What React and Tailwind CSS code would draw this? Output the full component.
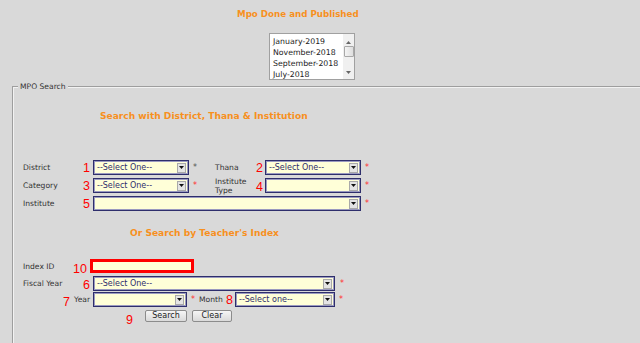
function Arrow() {
  return (
    <span className="ml-auto mr-[2px] flex h-[10px] w-[9px] shrink-0 items-center justify-center border border-[#a9a9a9] bg-[#e4e4e4]">
      <svg width="5" height="3" viewBox="0 0 5 3">
        <path d="M0 0h5L2.5 3z" fill="#111" />
      </svg>
    </span>
  )
}

function Select({ className, text }) {
  return (
    <div className={"flex h-[15px] shrink-0 items-center border border-[#2e2e6c] bg-[#ffffd8] shadow-[inset_0_0_0_1px_#9a9ac0] " + className}>
      <span className="pl-[3px] text-[8px] leading-[10px] text-[#2e2e6c]">{text}</span>
      <Arrow />
    </div>
  )
}

function Num({ className, children }) {
  return (
    <span className={"shrink-0 font-['Liberation_Sans',sans-serif] text-[12.5px] leading-[12px] text-[#ff0000] " + className}>
      {children}
    </span>
  )
}

function Star({ className, dark }) {
  return (
    <span className={"shrink-0 self-start pt-[4px] text-[8px] leading-[8px] " + (dark ? "text-[#555] " : "text-[#ff3030] ") + className}>*</span>
  )
}

function Label({ className, children }) {
  return <span className={"shrink-0 text-[7.6px] leading-[9px] text-[#333] " + className}>{children}</span>
}

function Heading({ className, children }) {
  return (
    <div className={"font-bold leading-[11px] text-[#f7901e] " + className}>{children}</div>
  )
}

export default function App() {
  return (
    <div className="h-[343px] w-[640px] overflow-hidden bg-[#d9d9d9] font-['DejaVu_Sans',sans-serif]">
      <Heading className="pl-[237px] pt-[9px] text-[8.7px]">Mpo Done and Published</Heading>

      <div className="ml-[269px] mt-[13px] flex h-[47px] w-[86px] border border-[#a0a0a0] bg-white">
        <div className="flex-1 pl-[3px] pt-[2px] text-[7.8px] leading-[11px] text-[#222]">
          <div>January-2019</div>
          <div>November-2018</div>
          <div>September-2018</div>
          <div>July-2018</div>
        </div>
        <div className="flex w-[11px] flex-col items-center bg-[#f0f0f0]">
          <svg className="mt-[7px]" width="5" height="3" viewBox="0 0 5 3">
            <path d="M2.5 0L5 3H0z" fill="#666" />
          </svg>
          <div className="mt-[2px] h-[11px] w-[10px] rounded-[1px] border border-[#a8a8a8] bg-gradient-to-r from-[#f4f4f4] to-[#dedede]" />
          <svg className="mt-auto mb-[5px]" width="5" height="3" viewBox="0 0 5 3">
            <path d="M0 0h5L2.5 3z" fill="#666" />
          </svg>
        </div>
      </div>

      <fieldset className="ml-[12px] mt-[2px] h-[300px] w-[700px] border-2 border-[#f2f2f2] pl-[4px] [border-style:groove]">
        <legend className="px-[2px] text-[7.6px] leading-[10px] text-[#333]">MPO Search</legend>
        <div className="pl-[5px]">
          <Heading className="ml-[77px] mt-[19px] text-[9.1px]">Search with District, Thana &amp; Institution</Heading>

          <div className="mt-[38px] flex h-[15px] items-center">
            <Label className="w-[58px]">District</Label>
            <Num className="w-[12px] pr-[3px] text-right">1</Num>
            <Select className="w-[96px]" text="--Select One--" />
            <Star dark className="w-[26px] pl-[4px]" />
            <Label className="w-[38px]">Thana</Label>
            <Num className="w-[12px] pr-[2px] text-right">2</Num>
            <Select className="w-[96px]" text="--Select One--" />
            <Star className="pl-[4px]" />
          </div>

          <div className="mt-[3px] flex h-[15px] items-center">
            <Label className="w-[58px]">Category</Label>
            <Num className="w-[12px] pr-[3px] text-right">3</Num>
            <Select className="w-[96px]" text="--Select One--" />
            <Star className="w-[26px] pl-[4px]" />
            <Label className="w-[38px] leading-[8.5px]">
              Institute
              <br />
              Type
            </Label>
            <Num className="w-[12px] self-end pr-[2px] text-right">4</Num>
            <Select className="w-[96px]" text="" />
            <Star className="pl-[4px]" />
          </div>

          <div className="mt-[3px] flex h-[15px] items-center">
            <Label className="w-[58px]">Institute</Label>
            <Num className="w-[12px] pr-[3px] text-right">5</Num>
            <Select className="w-[268px]" text="" />
            <Star className="pl-[4px]" />
          </div>

          <Heading className="ml-[107px] mt-[17px] text-[9.1px]">Or Search by Teacher's Index</Heading>

          <div className="mt-[20px] flex h-[14px] items-center">
            <Label className="w-[50px]">Index ID</Label>
            <Num className="mt-[5px] w-[17px] pr-[3px] text-right">10</Num>
            <div className="h-[14px] w-[104px] border-[3px] border-[#ff0000] bg-[#ffffd8]" />
          </div>

          <div className="mt-[3px] flex h-[15px] items-center">
            <Label className="w-[58px]">Fiscal Year</Label>
            <Num className="mt-[3px] w-[12px] pr-[3px] text-right">6</Num>
            <Select className="w-[242px]" text="--Select One--" />
            <Star className="pl-[5px]" />
          </div>

          <div className="mt-[1px] flex h-[15px] items-center">
            <span className="w-[40px] shrink-0" />
            <Num className="mt-[4px] w-[10px] pr-[4px] text-right">7</Num>
            <Label className="w-[20px] pl-[1px]">Year</Label>
            <Select className="w-[94px]" text="" />
            <Star className="w-[12px] pl-[4px]" />
            <Label className="w-[27px]">Month</Label>
            <Num className="w-[9px] pr-[2px] text-right">8</Num>
            <Select className="w-[100px]" text="--Select one--" />
            <Star className="pl-[4px]" />
          </div>

          <div className="mt-[3px] flex h-[12px] items-start">
            <span className="w-[103px] shrink-0" />
            <Num className="mt-[4px] w-[19px]">9</Num>
            <button className="flex h-[12px] w-[42px] items-center justify-center rounded-[2px] border border-[#8c8c8c] bg-gradient-to-b from-[#f6f6f6] to-[#dadada] text-[8px] leading-[10px] text-[#222]">
              Search
            </button>
            <button className="ml-[5px] flex h-[12px] w-[40px] items-center justify-center rounded-[2px] border border-[#8c8c8c] bg-gradient-to-b from-[#f6f6f6] to-[#dadada] text-[8px] leading-[10px] text-[#222]">
              Clear
            </button>
          </div>
        </div>
      </fieldset>
    </div>
  )
}
